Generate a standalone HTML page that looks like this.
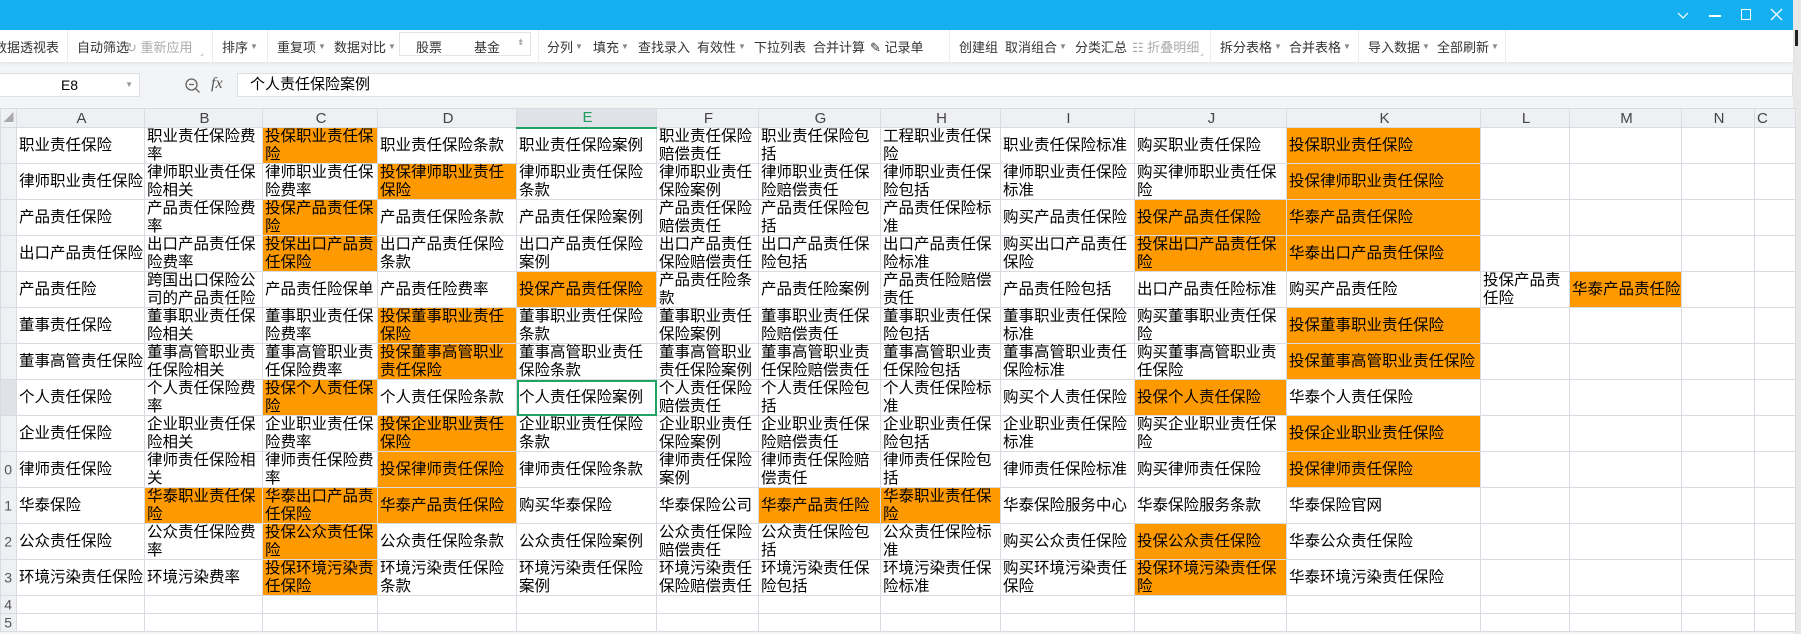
<!DOCTYPE html>
<html><head><meta charset="utf-8">
<style>
*{margin:0;padding:0;box-sizing:border-box}
body{width:1801px;height:634px;overflow:hidden;background:#f3f4f6;font-family:"Liberation Sans","Noto Sans CJK SC",sans-serif;position:relative;color:#000}
.title{position:absolute;left:0;top:0;width:1793px;height:30px;background:#14b0ef}
.tb{position:absolute;left:0;top:30px;width:1793px;height:32px;background:#fff;box-shadow:0 2px 3px rgba(0,0,0,.06)}
.t{position:absolute;top:7px;font-size:13px;color:#333;white-space:nowrap}
.g{color:#aaa}
.ar{font-size:8px;color:#888;vertical-align:3px;margin-left:2px}
.sep{position:absolute;top:0;width:1px;height:32px;background:#ececec}
.fb{position:absolute;top:72px;left:0;width:1793px;height:26px;background:#f3f4f6}
.nb{position:absolute;left:0;top:73px;width:140px;height:24px;background:#fff;border:1px solid #dcdfe3;border-left:none;font-size:14px;text-align:center;line-height:22px}
.inp{position:absolute;left:237px;top:73px;width:1556px;height:24px;background:#fff;border:1px solid #dcdfe3;font-size:15px;line-height:22px;padding-left:12px}
table{position:absolute;left:0;top:108px;width:1795px;border-collapse:collapse;table-layout:fixed;background:#fff}
td{border:1px solid #d8dce2;font-size:15.5px;line-height:17.5px;height:36px;padding:0 0 0 2px;vertical-align:middle;overflow:hidden;word-break:break-all}
tr.h td{height:19px;background:#eef0f3;color:#444;text-align:center;font-size:15px;line-height:17px}
td.rh{background:#eef0f3;color:#555;font-size:14px;padding:0;position:relative;white-space:nowrap}
td.rh span{position:absolute;right:4px;top:50%;transform:translateY(-50%)}
.o{background:#ff9900}
tr.s td{height:18px}
.sel{outline:2px solid #21a366;outline-offset:-2px}
</style></head><body>
<div class="title">
<svg style="position:absolute;left:1676px;top:11px" width="14" height="10"><path d="M2 2 L7 7 L12 2" stroke="#fff" fill="none" stroke-width="1.2"/></svg>
<div style="position:absolute;left:1709px;top:15px;width:12px;height:1.5px;background:#fff"></div>
<div style="position:absolute;left:1741px;top:9px;width:10px;height:11px;border:1.5px solid #fff"></div>
<svg style="position:absolute;left:1770px;top:8px" width="13" height="13"><path d="M1 1 L12 12 M12 1 L1 12" stroke="#fff" stroke-width="1.3"/></svg>
</div>
<div style="position:absolute;left:1793px;top:0;width:8px;height:634px;background:#e8e8e8"></div>
<div style="position:absolute;left:1795px;top:30px;width:3px;height:16px;background:#222"></div>
<div class="tb">
<span class="t" style="left:-6px">数据透视表</span><div class="sep" style="left:67px"></div>
<span class="t" style="left:77px">自动筛选</span>
<span class="t g" style="left:126px">↻ 重新应用</span><span class="t g" style="left:200px;top:18px;font-size:8px">⌟</span>
<div class="sep" style="left:212px"></div>
<span class="t" style="left:222px">排序<span class="ar">▼</span></span>
<div class="sep" style="left:267px"></div>
<span class="t" style="left:277px">重复项<span class="ar">▼</span></span>
<span class="t" style="left:334px">数据对比<span class="ar">▼</span></span>
<div style="position:absolute;left:399px;top:2px;width:132px;height:24px;border:1px solid #e4e4e4"></div>
<span class="t" style="left:416px">股票</span><span class="t" style="left:474px">基金</span><span class="t" style="left:517px;font-size:9px;color:#999">⇟</span>
<div class="sep" style="left:538px"></div>
<span class="t" style="left:547px">分列<span class="ar">▼</span></span>
<span class="t" style="left:593px">填充<span class="ar">▼</span></span>
<span class="t" style="left:638px">查找录入</span>
<span class="t" style="left:697px">有效性<span class="ar">▼</span></span>
<span class="t" style="left:754px">下拉列表</span>
<span class="t" style="left:813px">合并计算</span>
<span class="t" style="left:870px">✎ 记录单</span>
<div class="sep" style="left:949px"></div>
<span class="t" style="left:959px">创建组</span>
<span class="t" style="left:1005px">取消组合<span class="ar">▼</span></span>
<span class="t" style="left:1075px">分类汇总</span>
<span class="t g" style="left:1132px">☷ 折叠明细</span><span class="t g" style="left:1200px;top:18px;font-size:8px">⌟</span>
<div class="sep" style="left:1210px"></div>
<span class="t" style="left:1220px">拆分表格<span class="ar">▼</span></span>
<span class="t" style="left:1289px">合并表格<span class="ar">▼</span></span>
<div class="sep" style="left:1358px"></div>
<span class="t" style="left:1368px">导入数据<span class="ar">▼</span></span>
<span class="t" style="left:1437px">全部刷新<span class="ar">▼</span></span>
<div class="sep" style="left:1505px"></div>
</div>
<div class="fb"></div>
<div class="nb">E8<span style="position:absolute;right:6px;font-size:8px;color:#999">▼</span></div>
<svg style="position:absolute;left:184px;top:77px" width="18" height="18"><circle cx="7.5" cy="7.5" r="5.5" stroke="#666" stroke-width="1.3" fill="none"/><path d="M5 7.5h5M11.5 11.5l4 4" stroke="#666" stroke-width="1.3"/></svg>
<span style="position:absolute;left:211px;top:75px;font-family:'Liberation Serif',serif;font-style:italic;font-size:16px;color:#555">fx</span>
<div class="inp">个人责任保险案例</div>
<table>
<colgroup><col style="width:16px"><col style="width:128px"><col style="width:118px"><col style="width:115px"><col style="width:139px"><col style="width:140px"><col style="width:102px"><col style="width:122px"><col style="width:120px"><col style="width:134px"><col style="width:152px"><col style="width:194px"><col style="width:89px"><col style="width:112px"><col style="width:73px"><col style="width:41px"></colgroup>
<tr class="h"><td style="font-size:10px;color:#aaa;padding:0">◢</td><td>A</td><td>B</td><td>C</td><td>D</td><td style="background:#dfe2e6;color:#1e9e5e;border-bottom:2px solid #21a366">E</td><td>F</td><td>G</td><td>H</td><td>I</td><td>J</td><td>K</td><td>L</td><td>M</td><td>N</td><td style="text-align:left">C</td></tr>
<tr><td class="rh"><span></span></td><td>职业责任保险</td><td>职业责任保险费率</td><td class="o">投保职业责任保险</td><td>职业责任保险条款</td><td>职业责任保险案例</td><td>职业责任保险赔偿责任</td><td>职业责任保险包括</td><td>工程职业责任保险</td><td>职业责任保险标准</td><td>购买职业责任保险</td><td class="o">投保职业责任保险</td><td></td><td></td><td></td><td></td></tr>
<tr><td class="rh"><span></span></td><td>律师职业责任保险</td><td>律师职业责任保险相关</td><td>律师职业责任保险费率</td><td class="o">投保律师职业责任保险</td><td>律师职业责任保险条款</td><td>律师职业责任保险案例</td><td>律师职业责任保险赔偿责任</td><td>律师职业责任保险包括</td><td>律师职业责任保险标准</td><td>购买律师职业责任保险</td><td class="o">投保律师职业责任保险</td><td></td><td></td><td></td><td></td></tr>
<tr><td class="rh"><span></span></td><td>产品责任保险</td><td>产品责任保险费率</td><td class="o">投保产品责任保险</td><td>产品责任保险条款</td><td>产品责任保险案例</td><td>产品责任保险赔偿责任</td><td>产品责任保险包括</td><td>产品责任保险标准</td><td>购买产品责任保险</td><td class="o">投保产品责任保险</td><td class="o">华泰产品责任保险</td><td></td><td></td><td></td><td></td></tr>
<tr><td class="rh"><span></span></td><td>出口产品责任保险</td><td>出口产品责任保险费率</td><td class="o">投保出口产品责任保险</td><td>出口产品责任保险条款</td><td>出口产品责任保险案例</td><td>出口产品责任保险赔偿责任</td><td>出口产品责任保险包括</td><td>出口产品责任保险标准</td><td>购买出口产品责任保险</td><td class="o">投保出口产品责任保险</td><td class="o">华泰出口产品责任保险</td><td></td><td></td><td></td><td></td></tr>
<tr><td class="rh"><span></span></td><td>产品责任险</td><td>跨国出口保险公司的产品责任险</td><td>产品责任险保单</td><td>产品责任险费率</td><td class="o">投保产品责任保险</td><td>产品责任险条款</td><td>产品责任险案例</td><td>产品责任险赔偿责任</td><td>产品责任险包括</td><td>出口产品责任险标准</td><td>购买产品责任险</td><td>投保产品责任险</td><td class="o">华泰产品责任险</td><td></td><td></td></tr>
<tr><td class="rh"><span></span></td><td>董事责任保险</td><td>董事职业责任保险相关</td><td>董事职业责任保险费率</td><td class="o">投保董事职业责任保险</td><td>董事职业责任保险条款</td><td>董事职业责任保险案例</td><td>董事职业责任保险赔偿责任</td><td>董事职业责任保险包括</td><td>董事职业责任保险标准</td><td>购买董事职业责任保险</td><td class="o">投保董事职业责任保险</td><td></td><td></td><td></td><td></td></tr>
<tr><td class="rh"><span></span></td><td>董事高管责任保险</td><td>董事高管职业责任保险相关</td><td>董事高管职业责任保险费率</td><td class="o">投保董事高管职业责任保险</td><td>董事高管职业责任保险条款</td><td>董事高管职业责任保险案例</td><td>董事高管职业责任保险赔偿责任</td><td>董事高管职业责任保险包括</td><td>董事高管职业责任保险标准</td><td>购买董事高管职业责任保险</td><td class="o">投保董事高管职业责任保险</td><td></td><td></td><td></td><td></td></tr>
<tr><td class="rh" style="background:#dfe2e6"><span></span></td><td>个人责任保险</td><td>个人责任保险费率</td><td class="o">投保个人责任保险</td><td>个人责任保险条款</td><td class="sel">个人责任保险案例</td><td>个人责任保险赔偿责任</td><td>个人责任保险包括</td><td>个人责任保险标准</td><td>购买个人责任保险</td><td class="o">投保个人责任保险</td><td>华泰个人责任保险</td><td></td><td></td><td></td><td></td></tr>
<tr><td class="rh"><span></span></td><td>企业责任保险</td><td>企业职业责任保险相关</td><td>企业职业责任保险费率</td><td class="o">投保企业职业责任保险</td><td>企业职业责任保险条款</td><td>企业职业责任保险案例</td><td>企业职业责任保险赔偿责任</td><td>企业职业责任保险包括</td><td>企业职业责任保险标准</td><td>购买企业职业责任保险</td><td class="o">投保企业职业责任保险</td><td></td><td></td><td></td><td></td></tr>
<tr><td class="rh"><span>0</span></td><td>律师责任保险</td><td>律师责任保险相关</td><td>律师责任保险费率</td><td class="o">投保律师责任保险</td><td>律师责任保险条款</td><td>律师责任保险案例</td><td>律师责任保险赔偿责任</td><td>律师责任保险包括</td><td>律师责任保险标准</td><td>购买律师责任保险</td><td class="o">投保律师责任保险</td><td></td><td></td><td></td><td></td></tr>
<tr><td class="rh"><span>1</span></td><td>华泰保险</td><td class="o">华泰职业责任保险</td><td class="o">华泰出口产品责任保险</td><td class="o">华泰产品责任保险</td><td>购买华泰保险</td><td>华泰保险公司</td><td class="o">华泰产品责任险</td><td class="o">华泰职业责任保险</td><td>华泰保险服务中心</td><td>华泰保险服务条款</td><td>华泰保险官网</td><td></td><td></td><td></td><td></td></tr>
<tr><td class="rh"><span>2</span></td><td>公众责任保险</td><td>公众责任保险费率</td><td class="o">投保公众责任保险</td><td>公众责任保险条款</td><td>公众责任保险案例</td><td>公众责任保险赔偿责任</td><td>公众责任保险包括</td><td>公众责任保险标准</td><td>购买公众责任保险</td><td class="o">投保公众责任保险</td><td>华泰公众责任保险</td><td></td><td></td><td></td><td></td></tr>
<tr><td class="rh"><span>3</span></td><td>环境污染责任保险</td><td>环境污染费率</td><td class="o">投保环境污染责任保险</td><td>环境污染责任保险条款</td><td>环境污染责任保险案例</td><td>环境污染责任保险赔偿责任</td><td>环境污染责任保险包括</td><td>环境污染责任保险标准</td><td>购买环境污染责任保险</td><td class="o">投保环境污染责任保险</td><td>华泰环境污染责任保险</td><td></td><td></td><td></td><td></td></tr>
<tr class="s"><td class="rh"><span>4</span></td><td></td><td></td><td></td><td></td><td></td><td></td><td></td><td></td><td></td><td></td><td></td><td></td><td></td><td></td><td></td></tr>
<tr class="s"><td class="rh"><span>5</span></td><td></td><td></td><td></td><td></td><td></td><td></td><td></td><td></td><td></td><td></td><td></td><td></td><td></td><td></td><td></td></tr>
</table>
</body></html>
